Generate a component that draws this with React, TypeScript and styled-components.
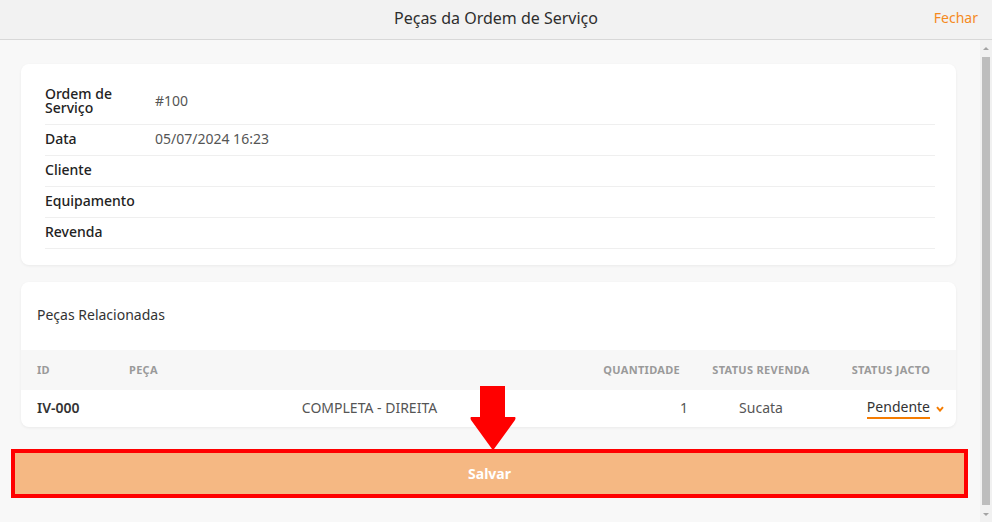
import React from "react";
import styled, { createGlobalStyle } from "styled-components";

const Global = createGlobalStyle`
  html, body { margin: 0; padding: 0; height: 100%; overflow: hidden; }
  body { font-family: "Noto Sans", "Open Sans", sans-serif; color: #333; }
  #root { height: 100%; }
  * { box-sizing: border-box; }
`;

const Page = styled.div`
  position: relative;
  height: 100vh;
  display: flex;
  flex-direction: column;
  background: #f8f8f8;
`;

const Header = styled.header`
  flex: 0 0 40px;
  height: 40px;
  background: #f2f2f2;
  border-bottom: 1px solid #d8d8d8;
  display: grid;
  grid-template-columns: 1fr auto 1fr;
  align-items: center;
  padding: 0 14px;
`;

const Title = styled.h1`
  grid-column: 2;
  margin: 0;
  font-family: "Noto Sans", sans-serif;
  font-weight: 400;
  font-size: 16px;
  color: #2e2e2e;
  padding-bottom: 4px;
`;

const CloseLink = styled.a`
  grid-column: 3;
  justify-self: end;
  font-family: "Noto Sans", sans-serif;
  font-size: 14px;
  color: #f58a1f;
  cursor: pointer;
  padding-bottom: 4px;
`;

const Body = styled.div`
  flex: 1;
  display: flex;
  min-height: 0;
`;

const Content = styled.main`
  flex: 1;
  overflow: hidden;
  padding: 24px 24px 30px 21px;
  display: flex;
  flex-direction: column;
`;

const ScrollBar = styled.div`
  flex: 0 0 12px;
  background: #f1f1f1;
  display: flex;
  flex-direction: column;
`;

const ScrollButton = styled.div<{ $down?: boolean }>`
  flex: 0 0 17px;
  display: flex;
  align-items: center;
  justify-content: center;
  &::after {
    content: "";
    width: 0;
    height: 0;
    border-left: 3px solid transparent;
    border-right: 3px solid transparent;
    ${(p) =>
      p.$down
        ? "border-top: 3px solid #a3a3a3; margin-top: 2px;"
        : "border-bottom: 3px solid #a3a3a3; margin-top: 0px;"}
  }
`;

const Thumb = styled.div`
  flex: 1;
  margin: 0 2px 0 2px;
  background: #bdbdbd;
`;

const Card = styled.section<{ $pad: string; $mt?: number }>`
  background: #fff;
  border-radius: 8px;
  box-shadow: 0 1px 3px rgba(0, 0, 0, 0.06);
  padding: ${(p) => p.$pad};
  margin-top: ${(p) => p.$mt ?? 0}px;
  flex-shrink: 0;
`;

const InfoRow = styled.div`
  display: flex;
  align-items: center;
  border-bottom: 1px solid #efefef;
  padding: 7px 0 9px;
  min-height: 31px;
  font-size: 14px;
  line-height: 14px;
`;

const Label = styled.div`
  width: 110px;
  padding-right: 10px;
  color: #222;
  font-weight: 500;
`;

const Value = styled.div`
  color: #555;
`;

const SectionTitle = styled.div`
  padding: 23px 16px 25px 16px;
  font-size: 14px;
  line-height: 20px;
  color: #333;
`;

const Table = styled.div`
  display: grid;
  grid-template-columns: 92px 1fr 130px 130px 130px;
`;

const Th = styled.div<{ $align?: string }>`
  background: #f7f7f7;
  height: 40px;
  display: flex;
  align-items: center;
  justify-content: ${(p) => p.$align ?? "flex-start"};
  font-size: 11px;
  font-weight: 700;
  letter-spacing: 0.3px;
  color: #9a9a9a;
  text-transform: uppercase;
  padding: 0 16px 2px;
`;

const Td = styled.div<{ $align?: string; $bold?: boolean; $color?: string; $pad?: string }>`
  height: 37px;
  display: flex;
  align-items: center;
  justify-content: ${(p) => p.$align ?? "flex-start"};
  font-size: 14px;
  color: ${(p) => p.$color ?? "#444"};
  font-weight: ${(p) => (p.$bold ? 600 : 400)};
  padding: ${(p) => p.$pad ?? "0 16px 3px"};
`;

const SelectBox = styled.div`
  display: flex;
  align-items: center;
  gap: 6px;
  padding-top: 3px;
`;

const SelectText = styled.span`
  color: #333;
  border-bottom: 2px solid #f57c00;
  padding-bottom: 1px;
  line-height: 18px;
`;

const SaveButton = styled.button`
  margin: 26px -8px 0 -6px;
  height: 41px;
  flex-shrink: 0;
  border: none;
  background: #f5b883;
  color: #fff;
  font-family: "Noto Sans", sans-serif;
  font-weight: 700;
  font-size: 14px;
  padding-bottom: 2px;
  outline: 4px solid #ff0000;
  cursor: pointer;
`;

const Arrow = styled.svg`
  position: absolute;
  left: 468px;
  top: 385px;
  width: 50px;
  height: 66px;
  pointer-events: none;
`;

const Chevron = () => (
  <svg width="8" height="6" viewBox="0 0 8 6">
    <path d="M1 1.2 L4 4.6 L7 1.2" fill="none" stroke="#f57c00" strokeWidth="2" />
  </svg>
);

const info: [string, string][] = [
  ["Ordem de Serviço", "#100"],
  ["Data", "05/07/2024 16:23"],
  ["Cliente", ""],
  ["Equipamento", ""],
  ["Revenda", ""],
];

export default function App() {
  return (
    <Page>
      <Global />
      <Header>
        <Title>Peças da Ordem de Serviço</Title>
        <CloseLink>Fechar</CloseLink>
      </Header>
      <Body>
        <Content>
          <Card $pad="16px 21px 16px 24px">
            {info.map(([l, v]) => (
              <InfoRow key={l}>
                <Label>{l}</Label>
                <Value>{v}</Value>
              </InfoRow>
            ))}
          </Card>
          <Card $pad="0" $mt={17}>
            <SectionTitle>Peças Relacionadas</SectionTitle>
            <Table>
              <Th>ID</Th>
              <Th>Peça</Th>
              <Th $align="flex-end">Quantidade</Th>
              <Th $align="center">Status Revenda</Th>
              <Th $align="center">Status Jacto</Th>
              <Td $bold $color="#333">IV-000</Td>
              <Td $align="center" $color="#555" $pad="0 16px 3px 76px">
                COMPLETA - DIREITA
              </Td>
              <Td $align="flex-end" $color="#555" $pad="0 8px 3px 16px">1</Td>
              <Td $align="center" $color="#555">Sucata</Td>
              <Td $align="flex-end" $pad="0 12px 3px 0">
                <SelectBox>
                  <SelectText>Pendente</SelectText>
                  <Chevron />
                </SelectBox>
              </Td>
            </Table>
          </Card>
          <SaveButton>Salvar</SaveButton>
        </Content>
        <ScrollBar>
          <ScrollButton />
          <Thumb />
          <ScrollButton $down />
        </ScrollBar>
      </Body>
      <Arrow viewBox="0 0 50 66">
        <path
          d="M12 1 H37 V32 H47 Q48 33 47 35 L26 64 Q25 65 24 64 L3 35 Q2 33 3 32 H12 Z"
          fill="#ff0000"
        />
      </Arrow>
    </Page>
  );
}
